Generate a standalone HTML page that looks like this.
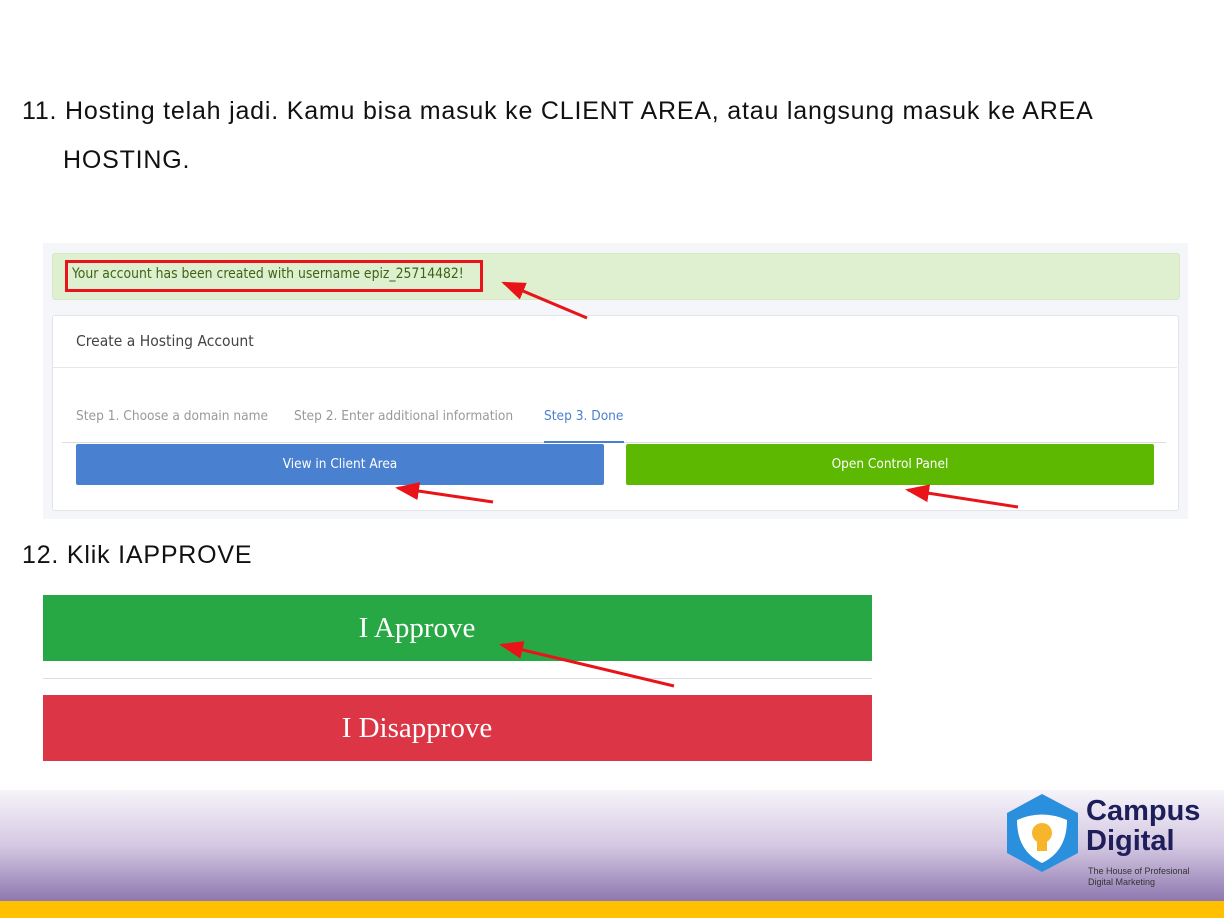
<!DOCTYPE html>
<html><head><meta charset="utf-8"><style>
body{margin:0;width:1224px;height:918px;position:relative;background:#fff;font-family:"Liberation Sans",sans-serif;overflow:hidden}
.a{position:absolute}
.t{font-family:"Liberation Sans",sans-serif;font-size:25px;color:#111;letter-spacing:0.8px;white-space:nowrap}
.s{font-family:"DejaVu Sans Condensed","Liberation Sans",sans-serif}
</style></head><body>
<div class="a t" style="left:22px;top:97px">11. Hosting telah jadi. Kamu bisa masuk ke CLIENT AREA, atau langsung masuk ke AREA</div>
<div class="a t" style="left:63px;top:146px">HOSTING.</div>

<div class="a" style="left:43px;top:243px;width:1145px;height:276px;background:#f5f6fa"></div>
<div class="a" style="left:52px;top:253px;width:1126px;height:45px;background:#dff0d0;border:1px solid #d4e8c4;border-radius:3px"></div>
<div class="a" style="left:65px;top:260px;width:418px;height:32px;border:3px solid #e8141a;box-sizing:border-box"></div>
<div class="a s" style="left:72px;top:266px;font-size:13.8px;color:#3c6418">Your account has been created with username epiz_25714482!</div>
<div class="a" style="left:52px;top:315px;width:1125px;height:194px;background:#fff;border:1px solid #e2e4ea;border-radius:3px"></div>
<div class="a" style="left:53px;top:367px;width:1124px;height:1px;background:#e6e8ee"></div>
<div class="a s" style="left:76px;top:332px;font-size:15.5px;color:#444">Create a Hosting Account</div>
<div class="a s" style="left:76px;top:408px;font-size:13.6px;color:#999">Step 1. Choose a domain name</div>
<div class="a s" style="left:294px;top:408px;font-size:13.6px;color:#999">Step 2. Enter additional information</div>
<div class="a s" style="left:544px;top:408px;font-size:13.6px;color:#4a80d0">Step 3. Done</div>
<div class="a" style="left:62px;top:442px;width:1104px;height:1px;background:#ddd"></div>
<div class="a" style="left:544px;top:441px;width:80px;height:2px;background:#4a80d0"></div>
<div class="a s" style="left:76px;top:444px;width:528px;height:41px;background:#4a80d0;border-radius:2px;color:#fff;font-size:13.5px;text-align:center;line-height:41px">View in Client Area</div>
<div class="a s" style="left:626px;top:444px;width:528px;height:41px;background:#5cb800;border-radius:2px;color:#fff;font-size:13.5px;text-align:center;line-height:41px">Open Control Panel</div>

<div class="a t" style="left:22px;top:541px">12. Klik IAPPROVE</div>
<div class="a" style="left:43px;top:595px;width:829px;height:66px;background:#28a745"></div>
<div class="a" style="left:317px;top:595px;width:200px;height:66px;color:#fff;font-family:'Liberation Serif',serif;font-size:29px;text-align:center;line-height:66px">I Approve</div>
<div class="a" style="left:43px;top:678px;width:829px;height:1px;background:#ddd"></div>
<div class="a" style="left:43px;top:695px;width:829px;height:66px;background:#dc3545"></div>
<div class="a" style="left:297px;top:695px;width:240px;height:66px;color:#fff;font-family:'Liberation Serif',serif;font-size:29px;text-align:center;line-height:66px">I Disapprove</div>

<svg class="a" style="left:0;top:0" width="1224" height="918">
<defs><marker id="m" markerWidth="8" markerHeight="8" refX="7" refY="4" orient="auto" markerUnits="strokeWidth"><path d="M0,1 L8,4 L0,7 Z" fill="#e8141a"/></marker></defs>
<g stroke="#e8141a" stroke-width="3" fill="none">
<line x1="587" y1="318" x2="504" y2="283" marker-end="url(#m)"/>
<line x1="493" y1="502" x2="398" y2="488" marker-end="url(#m)"/>
<line x1="1018" y1="507" x2="908" y2="490" marker-end="url(#m)"/>
<line x1="674" y1="686" x2="502" y2="645" marker-end="url(#m)"/>
</g></svg>

<div class="a" style="left:0;top:790px;width:1224px;height:111px;background:linear-gradient(#f6f4fa,#d4c8e2 50%,#8e78b0)"></div>
<div class="a" style="left:0;top:901px;width:1224px;height:17px;background:#ffc000"></div>
<svg class="a" style="left:1005px;top:793px" width="75" height="80" viewBox="0 0 75 80">
<polygon points="37,1 73,20 73,60 37,79 2,60 2,20" fill="#2a8fdc"/>
<path d="M12,27 Q37,16 62,27 Q62,58 37,70 Q12,58 12,27Z" fill="#fff"/>
<circle cx="37" cy="40" r="10" fill="#f7b52c"/>
<rect x="32" y="48" width="10" height="10" fill="#f7b52c"/>
</svg>
<div class="a" style="left:1086px;top:796px;font-size:29px;font-weight:bold;color:#1e1e5a;line-height:30px">Campus<br>Digital</div>
<div class="a" style="left:1088px;top:866px;font-size:9px;color:#333;line-height:11px">The House of Profesional<br>Digital Marketing</div>
</body></html>
